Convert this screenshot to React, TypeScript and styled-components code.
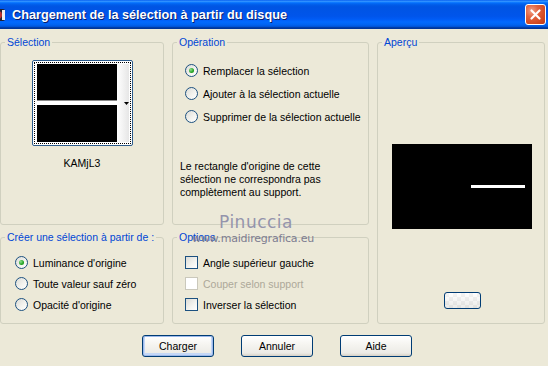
import React from 'react';
import styled, { createGlobalStyle, css } from 'styled-components';

const GlobalStyle = createGlobalStyle`
  html, body { margin: 0; padding: 0; background: #ECE9D8; }
  body {
    width: 548px; height: 366px; overflow: hidden;
    font-family: "Liberation Sans", Arial, sans-serif; font-size: 10.5px; color: #000;
  }
`;

const Window = styled.div`
  position: relative;
  width: 548px;
  height: 366px;
  display: flex;
  flex-direction: column;
  background: #ECE9D8;
`;

const TitleBar = styled.div`
  height: 29px;
  flex: none;
  display: flex;
  align-items: center;
  padding-right: 2px;
  background: linear-gradient(180deg, #0058EE 0%, #3593FF 4%, #288EFF 6%, #127DFF 8%, #036FFC 10%,
    #0262EE 14%, #0057E5 20%, #0054E3 24%, #0055EB 56%, #005BF5 66%, #026AFE 76%, #0062EF 86%,
    #0052D6 92%, #0040AB 94%, #003092 100%);
`;

const TitleIcon = styled.svg`
  width: 16px;
  height: 16px;
  margin-left: -10px;
  flex: none;
`;

const TitleText = styled.span`
  margin-left: 6px;
  color: #fff;
  font: bold 12.7px "Liberation Sans", Arial, sans-serif;
  text-shadow: 1px 1px 0 #0A1E6A;
`;

const CloseButton = styled.div`
  margin-left: auto;
  width: 21px;
  height: 21px;
  box-sizing: border-box;
  border: 1px solid #fff;
  border-radius: 3px;
  background: radial-gradient(circle at 30% 30%, #F0A088 0%, #E2633F 35%, #D24A22 70%, #C03A15 100%);
  display: flex;
  align-items: center;
  justify-content: center;
`;

const Content = styled.div`
  display: grid;
  grid-template-columns: 164px 197px 168px;
  grid-template-rows: 190px 94px;
  column-gap: 8px;
  row-gap: 5px;
  padding-top: 6px;
`;

const Group = styled.fieldset<{ $span?: boolean }>`
  margin: 0;
  padding: 0;
  min-width: 0;
  border: 1px solid #D0D0BF;
  border-radius: 3px;
  box-sizing: border-box;
  ${p => p.$span && css`grid-row: 1 / span 2; grid-column: 3;`}
`;

const Legend = styled.legend`
  margin-left: 4px;
  padding: 0 2px;
  color: #0046D5;
  font-size: 10.5px;
  line-height: 14px;
  white-space: nowrap;
`;

const SelectionBody = styled.div`
  display: flex;
  flex-direction: column;
  align-items: center;
  padding-top: 11px;
`;

const Thumb = styled.div`
  width: 101px;
  height: 86px;
  box-sizing: border-box;
  border: 1px solid #2B5B8C;
  border-radius: 2px;
  padding: 1px;
  background: #fff;
`;

const ThumbFocus = styled.div`
  width: 100%;
  height: 100%;
  box-sizing: border-box;
  border: 1px dotted #000;
  padding: 1px 1px 1px 2px;
  display: flex;
`;

const ThumbLabel = styled.div`
  margin-top: 11px;
  line-height: 13px;
`;

const OptionList = styled.div<{ $rowH: number; $pl: number; $pt: number }>`
  display: flex;
  flex-direction: column;
  padding-left: ${p => p.$pl}px;
  padding-top: ${p => p.$pt}px;
  & > * { height: ${p => p.$rowH}px; }
`;

const OptionRow = styled.label<{ $disabled?: boolean }>`
  display: flex;
  align-items: center;
  gap: 5px;
  color: ${p => (p.$disabled ? '#ACA899' : '#000')};
  white-space: nowrap;
`;

const RadioCircle = styled.span<{ $checked?: boolean }>`
  width: 13px;
  height: 13px;
  box-sizing: border-box;
  border: 1px solid #1C5180;
  border-radius: 50%;
  background: linear-gradient(135deg, #DCDCD7 0%, #F4F4F0 60%, #FFFFFF 100%);
  display: flex;
  align-items: center;
  justify-content: center;
  flex: none;
  &::after {
    content: '';
    width: 5px;
    height: 5px;
    border-radius: 50%;
    background: ${p => (p.$checked ? 'radial-gradient(circle at 35% 35%, #8EE08E 0%, #21A121 60%, #1A8A1A 100%)' : 'transparent')};
  }
`;

const CheckBox = styled.span<{ $disabled?: boolean }>`
  width: 13px;
  height: 13px;
  box-sizing: border-box;
  border: 1px solid ${p => (p.$disabled ? '#CAC8BB' : '#1C5180')};
  background: ${p => (p.$disabled ? '#fff' : 'linear-gradient(135deg, #DCDCD7 0%, #F4F4F0 60%, #FFFFFF 100%)')};
  flex: none;
`;

const Note = styled.p`
  margin: 32px 0 0 7px;
  line-height: 13px;
  width: 160px;
`;

const PreviewBody = styled.div`
  display: flex;
  flex-direction: column;
  align-items: center;
  padding-top: 95px;
`;

const PreviewImage = styled.svg`
  width: 140px;
  height: 85px;
  display: block;
  margin-left: 1px;
`;

const SwatchButton = styled.div`
  margin-top: 63px;
  margin-left: 2px;
  width: 37px;
  height: 17px;
  box-sizing: border-box;
  border: 1px solid #003C74;
  border-radius: 3px;
  background:
    linear-gradient(180deg, rgba(255,255,255,0.6), rgba(220,220,215,0.6)),
    repeating-conic-gradient(#FFFFFF 0% 25%, #E4E4E4 0% 50%) 0 0 / 8px 8px;
`;

const ButtonRow = styled.div`
  display: flex;
  gap: 27px;
  padding: 11px 0 0 142px;
`;

const Button = styled.button<{ $default?: boolean }>`
  width: 72px;
  height: 22px;
  box-sizing: border-box;
  border: 1px solid #003C74;
  border-radius: 3px;
  font: 10.5px "Liberation Sans", Arial, sans-serif;
  color: #000;
  padding: 0;
  background: linear-gradient(180deg, #FFFFFF 0%, #F6F5F1 40%, #ECEBE6 85%, #D6D0C5 100%);
  ${p => p.$default && css`
    box-shadow: inset 0 0 0 1px #9DB9EB, inset 0 -1px 0 2px #C4D7F6;
  `}
`;

const Watermark = styled.div`
  position: absolute;
  left: 190px;
  top: 211px;
  display: flex;
  flex-direction: column;
  align-items: center;
  pointer-events: none;
  width: 126px;
`;

const WatermarkName = styled.span`
  font: 17px "DejaVu Sans", sans-serif;
  color: #9494AC;
  letter-spacing: 0.5px;
  line-height: 22px;
  margin-left: 6px;
`;

const WatermarkUrl = styled.span`
  font: 11px "DejaVu Sans", sans-serif;
  color: #7C7C90;
  line-height: 12px;
  letter-spacing: -0.2px;
`;

export default function App() {
  return (
    <Window>
      <GlobalStyle />
      <TitleBar>
        <TitleIcon viewBox="0 0 16 16">
          <rect x="1" y="2" width="14" height="12" rx="2" fill="#223" />
          <circle cx="8" cy="8" r="4" fill="#C03030" />
          <rect x="12" y="3" width="3" height="10" fill="#EEE" />
        </TitleIcon>
        <TitleText>Chargement de la sélection à partir du disque</TitleText>
        <CloseButton>
          <svg width="13" height="13" viewBox="0 0 13 13">
            <path d="M2.5 2.5 L10.5 10.5 M10.5 2.5 L2.5 10.5" stroke="#fff" strokeWidth="2.2" strokeLinecap="round" />
          </svg>
        </CloseButton>
      </TitleBar>

      <Content>
        <Group>
          <Legend>Sélection</Legend>
          <SelectionBody>
            <Thumb>
              <ThumbFocus>
                <svg width="92" height="78" viewBox="0 0 92 78">
                  <defs>
                    <linearGradient id="strip" x1="0" x2="1" y1="0" y2="0">
                      <stop offset="0" stopColor="#FFFFFF" />
                      <stop offset="1" stopColor="#E6E6E6" />
                    </linearGradient>
                  </defs>
                  <rect x="0" y="0" width="80" height="78" fill="#000" />
                  <rect x="80" y="0" width="12" height="78" fill="url(#strip)" />
                  <rect x="0" y="36" width="80" height="1" fill="#8A8A8A" />
                  <rect x="0" y="37" width="80" height="4" fill="#fff" />
                  <path d="M87 38 L92 38 L89.5 41 Z" fill="#000" />
                </svg>
              </ThumbFocus>
            </Thumb>
            <ThumbLabel>KAMjL3</ThumbLabel>
          </SelectionBody>
        </Group>

        <Group>
          <Legend>Opération</Legend>
          <OptionList $rowH={23} $pl={12} $pt={10}>
            <OptionRow><RadioCircle $checked />Remplacer la sélection</OptionRow>
            <OptionRow><RadioCircle />Ajouter à la sélection actuelle</OptionRow>
            <OptionRow><RadioCircle />Supprimer de la sélection actuelle</OptionRow>
          </OptionList>
          <Note>
            Le rectangle d'origine de cette sélection ne correspondra pas complètement au support.
          </Note>
        </Group>

        <Group $span>
          <Legend>Aperçu</Legend>
          <PreviewBody>
            <PreviewImage viewBox="0 0 140 85">
              <rect x="0" y="0" width="140" height="85" fill="#000" />
              <rect x="79" y="41" width="54" height="3" fill="#fff" />
            </PreviewImage>
            <SwatchButton />
          </PreviewBody>
        </Group>

        <Group>
          <Legend>Créer une sélection à partir de :</Legend>
          <OptionList $rowH={21} $pl={14} $pt={8}>
            <OptionRow><RadioCircle $checked />Luminance d'origine</OptionRow>
            <OptionRow><RadioCircle />Toute valeur sauf zéro</OptionRow>
            <OptionRow><RadioCircle />Opacité d'origine</OptionRow>
          </OptionList>
        </Group>

        <Group>
          <Legend>Options</Legend>
          <OptionList $rowH={21} $pl={12} $pt={8}>
            <OptionRow><CheckBox />Angle supérieur gauche</OptionRow>
            <OptionRow $disabled><CheckBox $disabled />Couper selon support</OptionRow>
            <OptionRow><CheckBox />Inverser la sélection</OptionRow>
          </OptionList>
        </Group>
      </Content>

      <ButtonRow>
        <Button $default>Charger</Button>
        <Button>Annuler</Button>
        <Button>Aide</Button>
      </ButtonRow>

      <Watermark>
        <WatermarkName>Pinuccia</WatermarkName>
        <WatermarkUrl>www.maidiregrafica.eu</WatermarkUrl>
      </Watermark>
    </Window>
  );
}
